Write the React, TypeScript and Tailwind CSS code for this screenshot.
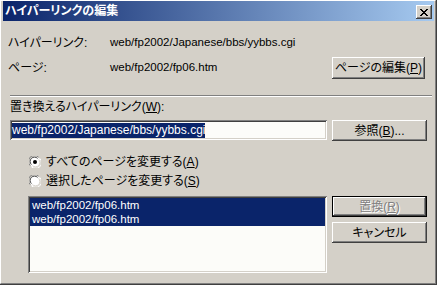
const ui = "font-['Liberation_Sans','Noto_Sans_CJK_JP',sans-serif] [font-feature-settings:'palt']";
const raised =
  "shadow-[inset_-1px_-1px_#404040,inset_1px_1px_#ffffff,inset_-2px_-2px_#808080,inset_2px_2px_#d4d0c8]";
const sunken =
  "shadow-[inset_1px_1px_#808080,inset_-1px_-1px_#ffffff,inset_2px_2px_#404040,inset_-2px_-2px_#d4d0c8]";

function Button({
  children,
  className = "",
  isDefault = false,
  disabled = false,
}: {
  children: React.ReactNode;
  className?: string;
  isDefault?: boolean;
  disabled?: boolean;
}) {
  return (
    <button
      type="button"
      className={`flex items-center justify-center bg-[#d4d0c8] text-[12px] leading-none ${
        isDefault ? "border border-black" : ""
      } ${disabled ? "text-[#808080] [text-shadow:1px_1px_#ffffff]" : "text-black"} ${raised} ${className}`}
    >
      {children}
    </button>
  );
}

function Radio({ checked, children }: { checked?: boolean; children: React.ReactNode }) {
  return (
    <div className="flex h-[14px] items-center">
      <svg width="12" height="12" viewBox="0 0 12 12" className="ml-[26px] shrink-0">
        <circle cx="6" cy="6" r="5.5" fill="#ffffff" />
        <path d="M1.2 9.6 A5.5 5.5 0 0 1 9.6 1.2" stroke="#808080" fill="none" />
        <path d="M2.4 8.6 A4.3 4.3 0 0 1 8.6 2.4" stroke="#404040" fill="none" />
        <path d="M10.8 2.4 A5.5 5.5 0 0 1 2.4 10.8" stroke="#ffffff" fill="none" />
        <path d="M9.6 3.4 A4.3 4.3 0 0 1 3.4 9.6" stroke="#d4d0c8" fill="none" />
        {checked && <circle cx="6" cy="6" r="2" fill="#000000" />}
      </svg>
      <span className="ml-[5px] text-[12px] leading-[14px]">{children}</span>
    </div>
  );
}

export default function App() {
  return (
    <div className={`h-[285px] w-[437px] bg-[#d4d0c8] text-black ${ui}`}>
      <div className="flex h-full w-full flex-col border-b border-r border-b-[#404040] border-r-[#404040]">
        <div className="flex flex-1 flex-col border-l border-t border-b border-r border-l-white border-t-white border-b-[#808080] border-r-[#808080] pl-[2px] pr-px">
          {/* title bar */}
          <div className="flex h-[20px] items-center bg-[linear-gradient(to_right,#0a246a,#a6caf0)] pl-[2px] pr-[2px]">
            <span className="text-[12px] font-bold leading-none text-white">
              ハイパーリンクの編集
            </span>
            <div className={`ml-auto mt-[2px] flex h-[14px] w-[16px] items-center justify-center bg-[#d4d0c8] ${raised}`}>
              <svg width="8" height="7" viewBox="0 0 8 7" shapeRendering="crispEdges">
                <path
                  d="M0 0h2v1h-2zM6 0h2v1h-2zM1 1h2v1h-2zM5 1h2v1h-2zM2 2h4v1h-4zM3 3h2v1h-2zM2 4h4v1h-4zM1 5h2v1h-2zM5 5h2v1h-2zM0 6h2v1h-2zM6 6h2v1h-2z"
                  fill="#000"
                />
              </svg>
            </div>
          </div>

          {/* hyperlink row */}
          <div className="mt-[15px] flex h-[14px] items-center text-[12px]">
            <span className="ml-[5px] w-[102px]">ハイパーリンク:</span>
            <span className="text-[11.5px]">web/fp2002/Japanese/bbs/yybbs.cgi</span>
          </div>

          {/* page row */}
          <div className="mt-[7px] flex h-[22px] items-center text-[12px]">
            <span className="ml-[5px] w-[102px]">ページ:</span>
            <span className="text-[11.5px]">web/fp2002/fp06.htm</span>
            <Button className="ml-auto mr-[9px] h-[22px] w-[93px]">
              ページの編集(<u>P</u>)
            </Button>
          </div>

          <div className="ml-[7px] mr-[2px] mt-[16px] border-b border-t border-b-white border-t-[#808080]" />

          <div className="ml-[7px] mt-[3px] h-[14px] text-[12px] leading-[14px]">
            置き換えるハイパーリンク(<u>W</u>):
          </div>

          <div className="mt-[6px] flex items-start">
            <div className={`ml-[7px] flex h-[20px] w-[317px] items-center bg-[#fcfcf9] px-[2px] ${sunken}`}>
              <span className="bg-[#0a246a] text-[12px] leading-[15px] text-white">
                web/fp2002/Japanese/bbs/yybbs.cgi
              </span>
            </div>
            <Button className="ml-[5px] h-[21px] w-[95px]">
              参照(<u>B</u>)...
            </Button>
          </div>

          <div className="mt-[14px]">
            <Radio checked>
              すべてのページを変更する(<u>A</u>)
            </Radio>
          </div>
          <div className="mt-[5px]">
            <Radio>
              選択したページを変更する(<u>S</u>)
            </Radio>
          </div>

          <div className="mt-[8px] flex items-start">
            <div className={`ml-[25px] flex h-[77px] w-[299px] flex-col bg-[#fcfcf9] p-[2px] ${sunken}`}>
              <div className="h-[14px] bg-[#0a246a] pl-[2px] text-[11.5px] leading-[14px] text-white">
                web/fp2002/fp06.htm
              </div>
              <div className="h-[14px] bg-[#0a246a] pl-[2px] text-[11.5px] leading-[14px] text-white">
                web/fp2002/fp06.htm
              </div>
            </div>
            <div className="ml-[5px] flex flex-col gap-[5px]">
              <Button isDefault disabled className="h-[21px] w-[95px]">
                置換(<u>R</u>)
              </Button>
              <Button className="h-[21px] w-[95px]">キャンセル</Button>
            </div>
          </div>
        </div>
      </div>
    </div>
  );
}
